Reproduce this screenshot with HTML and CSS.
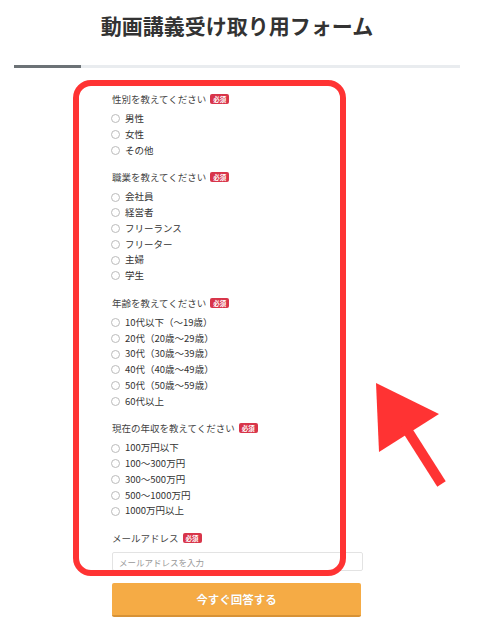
FILE: index.html
```html
<!DOCTYPE html>
<html lang="ja">
<head>
    <meta charset="UTF-8">
    <meta name="viewport" content="width=device-width, initial-scale=1.0">
    <title>動画講義受け取り用フォーム</title>
    <link rel="stylesheet" href="styles.css">
</head>
<body>

<div class="page">
    <h1>動画講義受け取り用フォーム</h1>

    <div class="progress"><div class="progress-bar"></div></div>

    <form class="form">
        <div class="field">
            <p class="label">性別を教えてください<span class="badge">必須</span></p>
            <label class="option"><input type="radio" name="gender"><span>男性</span></label>
            <label class="option"><input type="radio" name="gender"><span>女性</span></label>
            <label class="option"><input type="radio" name="gender"><span>その他</span></label>
        </div>

        <div class="field">
            <p class="label">職業を教えてください<span class="badge">必須</span></p>
            <label class="option"><input type="radio" name="job"><span>会社員</span></label>
            <label class="option"><input type="radio" name="job"><span>経営者</span></label>
            <label class="option"><input type="radio" name="job"><span>フリーランス</span></label>
            <label class="option"><input type="radio" name="job"><span>フリーター</span></label>
            <label class="option"><input type="radio" name="job"><span>主婦</span></label>
            <label class="option"><input type="radio" name="job"><span>学生</span></label>
        </div>

        <div class="field">
            <p class="label">年齢を教えてください<span class="badge">必須</span></p>
            <label class="option"><input type="radio" name="age"><span>10代以下（〜19歳）</span></label>
            <label class="option"><input type="radio" name="age"><span>20代（20歳〜29歳）</span></label>
            <label class="option"><input type="radio" name="age"><span>30代（30歳〜39歳）</span></label>
            <label class="option"><input type="radio" name="age"><span>40代（40歳〜49歳）</span></label>
            <label class="option"><input type="radio" name="age"><span>50代（50歳〜59歳）</span></label>
            <label class="option"><input type="radio" name="age"><span>60代以上</span></label>
        </div>

        <div class="field">
            <p class="label">現在の年収を教えてください<span class="badge">必須</span></p>
            <label class="option"><input type="radio" name="income"><span>100万円以下</span></label>
            <label class="option"><input type="radio" name="income"><span>100〜300万円</span></label>
            <label class="option"><input type="radio" name="income"><span>300〜500万円</span></label>
            <label class="option"><input type="radio" name="income"><span>500〜1000万円</span></label>
            <label class="option"><input type="radio" name="income"><span>1000万円以上</span></label>
        </div>

        <div class="field field-last">
            <p class="label">メールアドレス<span class="badge">必須</span></p>
            <input class="text-input" type="email" placeholder="メールアドレスを入力">
        </div>

        <button type="button" class="submit">今すぐ回答する</button>
    </form>

    <!-- red callout drawn over the form -->
    <div class="callout-box"></div>
    <svg class="callout-arrow" width="80" height="115" viewBox="0 0 80 115">
        <polygon points="6,8 69,39 9,77" fill="#ff3333"/>
        <line x1="34" y1="50" x2="71.5" y2="109" stroke="#ff3333" stroke-width="10"/>
    </svg>
</div>

</body>
</html>
```

FILE: styles.css
```css
body {
    margin: 0;
    padding: 0;
    background-color: #fff;
    font-family: "Noto Sans CJK JP", "Noto Sans", sans-serif;
    color: #333;
}
.page {
    position: relative;
    width: 446px;
    margin-left: 14px;
    min-height: 627px;
}
h1 {
    margin: 0;
    padding-top: 10px;
    font-size: 21px;
    line-height: 30px;
    font-weight: 700;
    text-align: center;
    color: #333;
}
.progress {
    margin-top: 25px;
    height: 3px;
    background-color: #e9ecef;
}
.progress-bar {
    width: 67px;
    height: 100%;
    background-color: #6c7276;
}
.form {
    width: 250px;
    margin: 0 auto;
    padding-top: 24px;
}
.field {
    display: flex;
    flex-direction: column;
    margin-bottom: 12px;
}
.label {
    display: flex;
    align-items: center;
    margin: 0 0 5px;
    font-size: 9.5px;
    line-height: 14px;
    color: #444;
}
.badge {
    display: inline-block;
    margin-left: 4px;
    padding: 0 3px;
    height: 10px;
    line-height: 10px;
    font-size: 6.5px;
    font-weight: 700;
    color: #fff;
    background-color: #d8354a;
    border-radius: 2px;
}
.option {
    display: flex;
    align-items: center;
    gap: 5px;
    font-size: 9.5px;
    line-height: 15.75px;
    color: #333;
}
.option input {
    appearance: none;
    width: 9px;
    height: 9px;
    margin: 0 0 0 -1px;
    border: 1px solid #bbb;
    border-radius: 50%;
    background-color: #fff;
}
.field-last {
    margin-bottom: 12px;
}
.field-last .label {
    margin-bottom: 7px;
}
.text-input {
    box-sizing: border-box;
    width: 251px;
    height: 19px;
    margin: 0;
    padding: 0 6px;
    border: 1px solid #e3e3e3;
    border-radius: 2px;
    font-family: inherit;
    font-size: 8.5px;
    color: #333;
}
.text-input::placeholder {
    color: #999;
}
.submit {
    display: block;
    width: 249px;
    height: 34px;
    padding: 0;
    border: none;
    border-bottom: 2px solid #d79236;
    border-radius: 2px;
    background-color: #f5ab45;
    color: #fff;
    font-family: inherit;
    font-size: 11.5px;
    font-weight: 700;
    text-shadow: 0 0 1px rgba(0, 0, 0, 0.15);
    cursor: pointer;
}
.callout-box {
    position: absolute;
    left: 59px;
    top: 80px;
    box-sizing: border-box;
    width: 273px;
    height: 496px;
    border: 6px solid #ff3333;
    border-radius: 18px;
    pointer-events: none;
}
.callout-arrow {
    position: absolute;
    left: 356px;
    top: 375px;
}
```
